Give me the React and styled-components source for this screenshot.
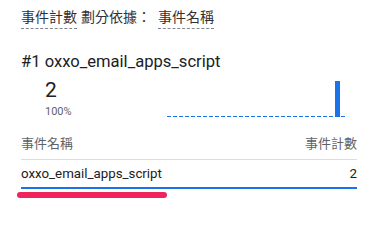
import styled, { createGlobalStyle } from "styled-components";

const GlobalStyle = createGlobalStyle`
    body {
        margin: 0;
        background: #ffffff;
        font-family: Roboto, "Noto Sans CJK TC", sans-serif;
    }
`;

const rows = [{ name: "oxxo_email_apps_script", count: 2 }];

const App = () => {
    return (
        <Page>
            <GlobalStyle />
            <TitleRow>
                <Dotted>事件計數</Dotted>
                <Plain>劃分依據：</Plain>
                <Dotted>事件名稱</Dotted>
            </TitleRow>
            <Heading>#1 oxxo_email_apps_script</Heading>
            <StatRow>
                <StatBox>
                    <StatValue>2</StatValue>
                    <StatPercent>100%</StatPercent>
                </StatBox>
                <Chart width="186" height="40" viewBox="0 0 186 40">
                    <line x1="7" y1="37.5" x2="186" y2="37.5" stroke="#1a73e8" strokeWidth="1" strokeDasharray="4 2" />
                    <rect x="175" y="2" width="5" height="36" fill="#1a73e8" />
                </Chart>
            </StatRow>
            <Table>
                <HeadRow>
                    <HeadCell>事件名稱</HeadCell>
                    <HeadCell>事件計數</HeadCell>
                </HeadRow>
                {rows.map((r) => (
                    <BodyRow key={r.name}>
                        <Cell>{r.name}</Cell>
                        <Cell>{r.count}</Cell>
                    </BodyRow>
                ))}
            </Table>
            <Highlight />
        </Page>
    );
};

export default App;

const Page = styled.div`
    width: 377px;
    box-sizing: border-box;
    padding: 7px 20px 0 21px;
`;

const TitleRow = styled.div`
    display: flex;
    align-items: flex-start;
    gap: 4px;
    font-size: 14px;
    line-height: 20px;
    color: #303134;
`;

const Dotted = styled.span`
    padding-bottom: 1px;
    border-bottom: 1px dashed #80868b;
`;

const Plain = styled.span`
    margin-right: 3px;
`;

const Heading = styled.div`
    margin-top: 22px;
    font-size: 16.6px;
    line-height: 22px;
    color: #202124;
`;

const StatRow = styled.div`
    display: flex;
    justify-content: space-between;
    align-items: flex-start;
    margin-top: 6px;
    padding-left: 24px;
`;

const StatBox = styled.div`
    display: flex;
    flex-direction: column;
`;

const StatValue = styled.div`
    font-size: 21px;
    line-height: 22px;
    color: #202124;
`;

const StatPercent = styled.div`
    margin-top: 4px;
    font-size: 11px;
    line-height: 14px;
    color: #5f6368;
`;

const Chart = styled.svg`
    display: block;
    margin-right: 11px;
`;

const Table = styled.div`
    margin-top: 16px;
    display: flex;
    flex-direction: column;
`;

const HeadRow = styled.div`
    display: flex;
    justify-content: space-between;
    padding-bottom: 6px;
    border-bottom: 1px solid #dadce0;
    font-size: 13px;
    line-height: 18px;
    color: #5f6368;
`;

const HeadCell = styled.span``;

const BodyRow = styled.div`
    display: flex;
    justify-content: space-between;
    align-items: center;
    height: 27px;
    border-bottom: 2px solid #1a73e8;
    font-size: 13.3px;
    color: #202124;
`;

const Cell = styled.span``;

const Highlight = styled.div`
    width: 150px;
    height: 6px;
    margin: 3px 0 0 -4px;
    border-radius: 3px;
    background: #f0245d;
`;
